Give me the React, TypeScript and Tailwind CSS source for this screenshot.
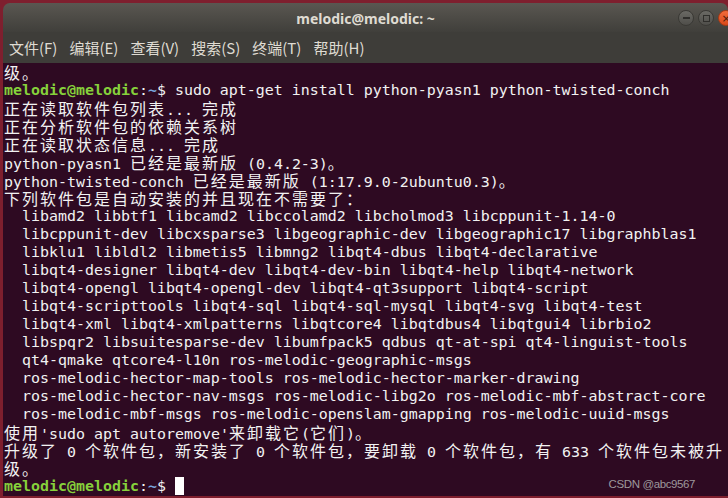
import React from 'react';

const CJK = /([\u2E80-\u9FFF\u3000-\u303F\uFF00-\uFFEF]+)/;

// wide chars take two cells in the terminal, so pad them out to 18px
function Txt({ s }: { s: string }) {
  const parts = s.split(CJK);
  return (
    <>
      {parts.map((p, i) =>
        i % 2 === 1 ? (
          <span
            key={i}
            className="font-['Noto_Sans_CJK_SC',sans-serif] text-[16px] tracking-[2px]"
          >
            {p}
          </span>
        ) : (
          <React.Fragment key={i}>{p}</React.Fragment>
        )
      )}
    </>
  );
}

function Prompt() {
  return (
    <>
      <span className="font-bold text-[#86d13b]">melodic@melodic</span>:
      <span className="font-bold text-[#78a5dc]">~</span>$
    </>
  );
}

const lines: string[] = [
  '级。',
  '__PROMPT__ sudo apt-get install python-pyasn1 python-twisted-conch',
  '正在读取软件包列表... 完成',
  '正在分析软件包的依赖关系树',
  '正在读取状态信息... 完成',
  'python-pyasn1 已经是最新版 (0.4.2-3)。',
  'python-twisted-conch 已经是最新版 (1:17.9.0-2ubuntu0.3)。',
  '下列软件包是自动安装的并且现在不需要了：',
  '  libamd2 libbtf1 libcamd2 libccolamd2 libcholmod3 libcppunit-1.14-0',
  '  libcppunit-dev libcxsparse3 libgeographic-dev libgeographic17 libgraphblas1',
  '  libklu1 libldl2 libmetis5 libmng2 libqt4-dbus libqt4-declarative',
  '  libqt4-designer libqt4-dev libqt4-dev-bin libqt4-help libqt4-network',
  '  libqt4-opengl libqt4-opengl-dev libqt4-qt3support libqt4-script',
  '  libqt4-scripttools libqt4-sql libqt4-sql-mysql libqt4-svg libqt4-test',
  '  libqt4-xml libqt4-xmlpatterns libqtcore4 libqtdbus4 libqtgui4 librbio2',
  '  libspqr2 libsuitesparse-dev libumfpack5 qdbus qt-at-spi qt4-linguist-tools',
  '  qt4-qmake qtcore4-l10n ros-melodic-geographic-msgs',
  '  ros-melodic-hector-map-tools ros-melodic-hector-marker-drawing',
  '  ros-melodic-hector-nav-msgs ros-melodic-libg2o ros-melodic-mbf-abstract-core',
  '  ros-melodic-mbf-msgs ros-melodic-openslam-gmapping ros-melodic-uuid-msgs',
  "使用'sudo apt autoremove'来卸载它(它们)。",
  '升级了 0 个软件包，新安装了 0 个软件包，要卸载 0 个软件包，有 633 个软件包未被升',
  '级。',
];

const menus = ['文件(F)', '编辑(E)', '查看(V)', '搜索(S)', '终端(T)', '帮助(H)'];

export default function App() {
  return (
    <div className="w-[728px] h-[498px] overflow-hidden bg-[#7e1f2e] pt-[3px] pl-[3px] pb-[2px]">
      <div className="flex flex-col h-full rounded-t-[7px] overflow-hidden">
        {/* title bar */}
        <div className="relative h-[29px] shrink-0 flex items-center justify-center bg-gradient-to-b from-[#5a5751] to-[#403f3b]">
          <span className="font-['Noto_Sans',sans-serif] font-bold text-[14px] text-[#dfdbd2] pt-[1px]">
            melodic@melodic: ~
          </span>
          <div className="absolute right-[-6px] top-[7px] flex gap-[4px]">
            <div className="w-[16px] h-[16px] rounded-full bg-gradient-to-b from-[#6b6a65] to-[#4f4e4a] border border-[#3a3935] flex items-center justify-center">
              <div className="w-[7px] h-[1.5px] bg-[#2f2e2b]" />
            </div>
            <div className="w-[16px] h-[16px] rounded-full bg-gradient-to-b from-[#6b6a65] to-[#4f4e4a] border border-[#3a3935] flex items-center justify-center">
              <div className="w-[7px] h-[7px] border border-[#2f2e2b]" />
            </div>
            <div className="w-[16px] h-[16px] rounded-full bg-gradient-to-b from-[#f26b3a] to-[#d9491a] border border-[#a93a14] flex items-center justify-center text-[#4a1a0a] text-[11px] leading-none font-['DejaVu_Sans',sans-serif]">
              ×
            </div>
          </div>
        </div>

        {/* menu bar */}
        <div className="h-[31px] shrink-0 flex items-center bg-[#3e3d39] pt-[2px]">
          {menus.map((m) => (
            <span
              key={m}
              className="px-[6px] font-['Noto_Sans_CJK_SC',sans-serif] text-[15px] text-[#dfdbd2]"
            >
              {m}
            </span>
          ))}
        </div>

        {/* terminal */}
        <div className="relative flex-1 bg-[#2e0a22] pl-[1px] font-['DejaVu_Sans_Mono',monospace] text-[14.95px] text-[#f2f2f2]">
          {lines.map((l, i) => (
            <div key={i} className="h-[18px] leading-[18px] whitespace-pre">
              {l.startsWith('__PROMPT__') ? (
                <>
                  <Prompt />
                  <Txt s={l.slice(10)} />
                </>
              ) : (
                <Txt s={l} />
              )}
            </div>
          ))}
          <div className="h-[18px] leading-[18px] whitespace-pre">
            <Prompt />{' '}
            <span className="inline-block w-[9px] h-[18px] bg-white align-top" />
          </div>

          <div className="absolute right-[33px] bottom-[6px] leading-none font-['Liberation_Sans',sans-serif] text-[11.5px] tracking-[-0.4px] text-[#9d989c]">
            CSDN @abc9567
          </div>
        </div>
      </div>
    </div>
  );
}
